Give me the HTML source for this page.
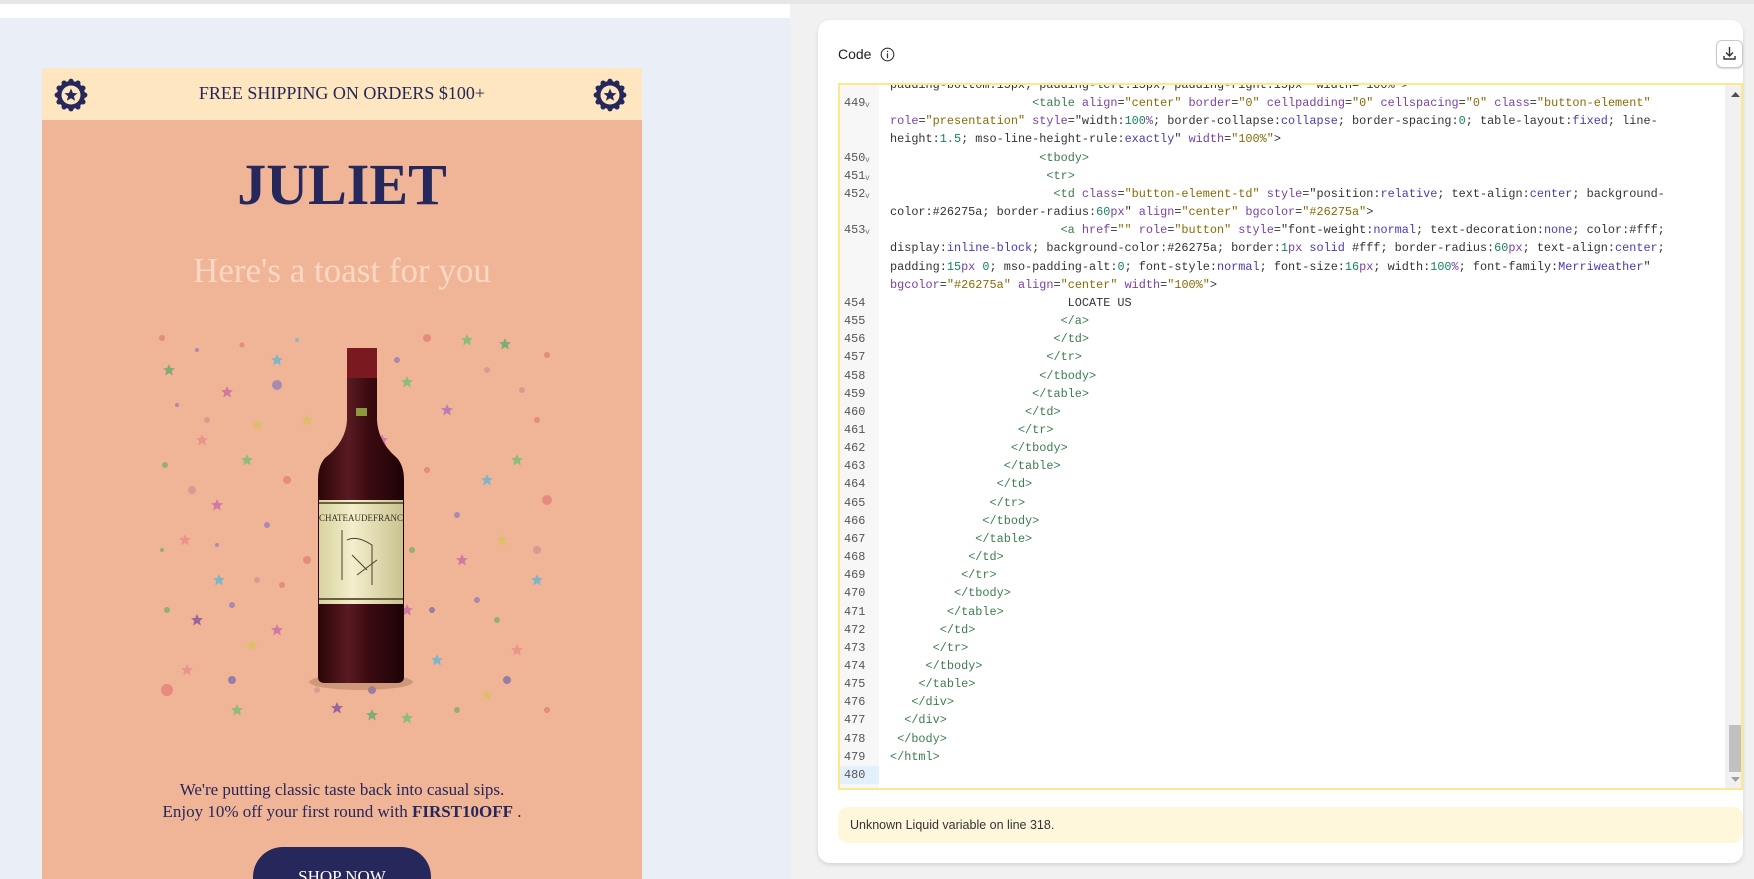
<!DOCTYPE html>
<html><head><meta charset="utf-8">
<style>
*{margin:0;padding:0;box-sizing:border-box}
body{width:1754px;height:879px;overflow:hidden;background:#f1f1f1;font-family:"Liberation Sans",sans-serif;position:relative}
.abs{position:absolute}
#topline{left:0;top:0;width:1754px;height:4px;background:#e6e6e6}
#whitebar{left:0;top:4px;width:790px;height:14px;background:#fff}
#left{left:0;top:18px;width:790px;height:861px;background:#eaeff7}
#email{left:42px;top:68px;width:600px;height:811px;background:#f0b596;overflow:hidden}
#banner{left:0;top:0;width:600px;height:52px;background:#fde6c0}
.serif{font-family:"Liberation Serif","DejaVu Serif",serif}
#card{left:818px;top:20px;width:925px;height:843px;background:#fff;border-radius:12px;box-shadow:0 2px 4px rgba(0,0,0,.12)}
#editor{left:838px;top:83px;width:905px;height:707px;border:2px solid #fce98c;background:#fff;overflow:hidden}
#gutter{left:0;top:0;width:39px;height:703px;background:#f7f7f7}
#code{left:0;top:-9px;font-family:"Liberation Mono",monospace;font-size:11.85px;line-height:18.16px;color:#333;white-space:normal}
.row{height:18.16px;display:flex;white-space:pre}
.g{width:39px;padding-left:4px;color:#555;position:relative;flex:none}
.g i{position:absolute;left:25px;top:3px;font-style:normal;font-size:8px;color:#777}
.c{padding-left:11px}
.hl .g{background:#e3effb}
.t{color:#3b7d4f}.a{color:#7a3fa8}.s{color:#8a6a05}.n{color:#12855a}.k{color:#4a3ab8}
</style></head><body>
<div class="abs" id="topline"></div>
<div class="abs" id="whitebar"></div>
<div class="abs" id="left"></div>

<div class="abs" id="email">
  <div class="abs" id="banner">
    <svg class="abs" style="left:12px;top:10px" width="34" height="34" viewBox="0 0 34 34">
      <g fill="#26275a"><circle cx="17" cy="17" r="14"/>
      <g id="tk"><circle cx="17" cy="3.2" r="2.6"/></g>
      <use href="#tk" transform="rotate(30 17 17)"/><use href="#tk" transform="rotate(60 17 17)"/><use href="#tk" transform="rotate(90 17 17)"/><use href="#tk" transform="rotate(120 17 17)"/><use href="#tk" transform="rotate(150 17 17)"/><use href="#tk" transform="rotate(180 17 17)"/><use href="#tk" transform="rotate(210 17 17)"/><use href="#tk" transform="rotate(240 17 17)"/><use href="#tk" transform="rotate(270 17 17)"/><use href="#tk" transform="rotate(300 17 17)"/><use href="#tk" transform="rotate(330 17 17)"/></g>
      <circle cx="17" cy="17" r="9.5" fill="#fde6c0"/>
      <polygon fill="#26275a" points="17,10.5 18.9,15 23.5,15.2 19.9,18.2 21.1,22.8 17,20.2 12.9,22.8 14.1,18.2 10.5,15.2 15.1,15"/>
    </svg>
    <svg class="abs" style="left:551px;top:10px" width="34" height="34" viewBox="0 0 34 34">
      <g fill="#26275a"><circle cx="17" cy="17" r="14"/>
      <g id="tk2"><circle cx="17" cy="3.2" r="2.6"/></g>
      <use href="#tk2" transform="rotate(30 17 17)"/><use href="#tk2" transform="rotate(60 17 17)"/><use href="#tk2" transform="rotate(90 17 17)"/><use href="#tk2" transform="rotate(120 17 17)"/><use href="#tk2" transform="rotate(150 17 17)"/><use href="#tk2" transform="rotate(180 17 17)"/><use href="#tk2" transform="rotate(210 17 17)"/><use href="#tk2" transform="rotate(240 17 17)"/><use href="#tk2" transform="rotate(270 17 17)"/><use href="#tk2" transform="rotate(300 17 17)"/><use href="#tk2" transform="rotate(330 17 17)"/></g>
      <circle cx="17" cy="17" r="9.5" fill="#fde6c0"/>
      <polygon fill="#26275a" points="17,10.5 18.9,15 23.5,15.2 19.9,18.2 21.1,22.8 17,20.2 12.9,22.8 14.1,18.2 10.5,15.2 15.1,15"/>
    </svg>
    <div class="abs serif" style="left:0;top:15px;width:600px;text-align:center;font-size:18px;color:#26275a">FREE SHIPPING ON ORDERS $100+</div>
  </div>
  <div class="abs serif" style="left:0;top:82px;width:600px;text-align:center;font-size:58px;font-weight:bold;color:#26275a;line-height:70px">JULIET</div>
  <div class="abs serif" style="left:0;top:183px;width:600px;text-align:center;font-size:35px;color:#fcd8c4;line-height:40px">Here's a toast for you</div>

  <svg class="abs" style="left:115px;top:262px" width="408" height="397" viewBox="0 0 408 397">
    <defs><polygon id="st" points="0,-6 1.8,-2 6,-1.8 2.8,1 3.8,5.5 0,3 -3.8,5.5 -2.8,1 -6,-1.8 -1.8,-2"/></defs>
    <g opacity=".75">
    <use href="#st" x="12" y="40" fill="#5aa86a"/><use href="#st" x="70" y="62" fill="#c766a8"/><use href="#st" x="310" y="10" fill="#6cc070"/><use href="#st" x="348" y="14" fill="#5aa86a"/>
    <use href="#st" x="100" y="95" fill="#d9c25a"/><use href="#st" x="60" y="175" fill="#c766a8"/><use href="#st" x="28" y="210" fill="#e88a8a"/><use href="#st" x="90" y="130" fill="#6cc070"/>
    <use href="#st" x="250" y="52" fill="#6cc070"/><use href="#st" x="290" y="80" fill="#a66ec2"/><use href="#st" x="330" y="150" fill="#5bb6d6"/><use href="#st" x="360" y="130" fill="#6cc070"/>
    <use href="#st" x="345" y="210" fill="#d9c25a"/><use href="#st" x="305" y="230" fill="#c766a8"/><use href="#st" x="380" y="250" fill="#5bb6d6"/><use href="#st" x="250" y="280" fill="#c766a8"/>
    <use href="#st" x="40" y="290" fill="#7b4c9a"/><use href="#st" x="95" y="315" fill="#d9c25a"/><use href="#st" x="30" y="340" fill="#e88a8a"/><use href="#st" x="80" y="380" fill="#6cc070"/>
    <use href="#st" x="180" y="378" fill="#7b4c9a"/><use href="#st" x="250" y="388" fill="#6cc070"/><use href="#st" x="330" y="365" fill="#d9c25a"/><use href="#st" x="360" y="320" fill="#e88a8a"/>
    <use href="#st" x="62" y="250" fill="#5bb6d6"/><use href="#st" x="120" y="300" fill="#c766a8"/><use href="#st" x="280" y="330" fill="#5bb6d6"/><use href="#st" x="150" y="90" fill="#d9c25a"/>
    <use href="#st" x="225" y="110" fill="#c766a8"/><use href="#st" x="120" y="30" fill="#5bb6d6"/><use href="#st" x="45" y="110" fill="#e88a8a"/><use href="#st" x="215" y="385" fill="#5aa86a"/>
    </g>
    <g opacity=".6">
    <circle cx="5" cy="8" r="3" fill="#e07070"/><circle cx="40" cy="20" r="2" fill="#7b6ec6"/><circle cx="85" cy="15" r="2.5" fill="#e07070"/><circle cx="140" cy="10" r="2" fill="#5bb6d6"/><circle cx="270" cy="8" r="4" fill="#e07070"/><circle cx="390" cy="25" r="3" fill="#e07070"/>
    <circle cx="120" cy="55" r="5" fill="#7b6ec6"/><circle cx="20" cy="75" r="2" fill="#7b6ec6"/><circle cx="50" cy="90" r="3" fill="#c09090"/><circle cx="170" cy="130" r="3" fill="#7b6ec6"/><circle cx="380" cy="90" r="3" fill="#e07070"/>
    <circle cx="8" cy="135" r="3" fill="#5aa86a"/><circle cx="130" cy="150" r="4" fill="#e07070"/><circle cx="110" cy="195" r="3" fill="#7b6ec6"/><circle cx="150" cy="230" r="4" fill="#e07070"/><circle cx="390" cy="170" r="5" fill="#e07070"/>
    <circle cx="300" cy="185" r="3" fill="#7b6ec6"/><circle cx="320" cy="270" r="3" fill="#7b6ec6"/><circle cx="380" cy="220" r="4" fill="#c09090"/><circle cx="5" cy="220" r="2" fill="#5aa86a"/><circle cx="10" cy="280" r="3" fill="#5aa86a"/>
    <circle cx="75" cy="275" r="3" fill="#7b6ec6"/><circle cx="125" cy="255" r="3" fill="#e07070"/><circle cx="75" cy="350" r="4" fill="#5a5ab0"/><circle cx="10" cy="360" r="6" fill="#e07070"/><circle cx="275" cy="280" r="3" fill="#5a5ab0"/>
    <circle cx="350" cy="350" r="4" fill="#5a5ab0"/><circle cx="215" cy="360" r="4" fill="#5a5ab0"/><circle cx="390" cy="380" r="3" fill="#e07070"/><circle cx="160" cy="360" r="3" fill="#c09090"/><circle cx="300" cy="380" r="3" fill="#5aa86a"/>
    <circle cx="240" cy="30" r="3" fill="#7b6ec6"/><circle cx="330" cy="40" r="3" fill="#c09090"/><circle cx="270" cy="140" r="3" fill="#e07070"/><circle cx="255" cy="220" r="3" fill="#5aa86a"/><circle cx="195" cy="30" r="3" fill="#c766a8"/>
    <circle cx="35" cy="160" r="4" fill="#c09090"/><circle cx="60" cy="215" r="2" fill="#7b6ec6"/><circle cx="100" cy="250" r="3" fill="#c09090"/><circle cx="340" cy="290" r="3" fill="#5aa86a"/><circle cx="365" cy="60" r="3" fill="#c09090"/>
    </g>
    <defs>
      <linearGradient id="bg" x1="0" x2="1"><stop offset="0" stop-color="#2a0508"/><stop offset=".35" stop-color="#5a1a22"/><stop offset=".6" stop-color="#3a0a10"/><stop offset="1" stop-color="#1e0306"/></linearGradient>
      <linearGradient id="lg" x1="0" x2="1"><stop offset="0" stop-color="#d8d3a0"/><stop offset=".4" stop-color="#f3eecb"/><stop offset="1" stop-color="#c9c390"/></linearGradient>
    </defs>
    <ellipse cx="204" cy="352" rx="52" ry="8" fill="#b07b60" opacity=".5"/>
    <path d="M190 22 Q190 18 194 18 L216 18 Q220 18 220 22 L220 90 Q221 112 240 128 Q247 136 247 150 L247 347 Q247 353 240 353 L168 353 Q161 353 161 347 L161 150 Q161 136 168 128 Q189 112 190 90 Z" fill="url(#bg)"/>
    <rect x="190" y="18" width="30" height="30" fill="#7a1a20"/>
    <rect x="199" y="78" width="11" height="8" fill="#8b9a3a"/>
    <rect x="162" y="170" width="84" height="104" fill="url(#lg)"/>
    <rect x="162" y="172" width="84" height="2" fill="#6a6040"/>
    <rect x="162" y="268" width="84" height="2" fill="#6a6040"/>
    <text x="204" y="191" font-family="Liberation Serif" font-size="9" text-anchor="middle" fill="#3a3020">CHATEAUDEFRANC</text>
    <path d="M185 200 L185 250 M190 210 Q200 205 215 215 L215 255 M195 225 L210 240 M200 245 L220 230" stroke="#4a4030" fill="none" stroke-width="1"/>
  </svg>

  <div class="abs serif" style="left:0;top:711px;width:600px;text-align:center;font-size:17px;line-height:22px;color:#26275a">We're putting classic taste back into casual sips.<br>Enjoy 10% off your first round with <b>FIRST10OFF</b> .</div>
  <div class="abs serif" style="left:211px;top:779px;width:178px;height:60px;border-radius:30px;background:#26275a;color:#fff;text-align:center;font-size:17px;line-height:60px">SHOP NOW</div>
</div>

<div class="abs" id="card"></div>
<div class="abs" style="left:838px;top:46px;font-size:14px;color:#202020">Code</div>
<svg class="abs" style="left:880px;top:47px" width="15" height="15" viewBox="0 0 15 15"><circle cx="7.5" cy="7.5" r="6.3" fill="none" stroke="#333" stroke-width="1.1"/><rect x="6.9" y="6.3" width="1.2" height="5" fill="#333"/><rect x="6.9" y="3.8" width="1.2" height="1.3" fill="#333"/></svg>
<div class="abs" style="left:1716px;top:40px;width:27px;height:28px;border:1px solid #c9c9c9;border-radius:6px;background:#fff;box-shadow:0 1px 1px rgba(0,0,0,.15)"></div>
<svg class="abs" style="left:1721px;top:45px" width="17" height="17" viewBox="0 0 17 17"><path d="M8.5 2 V11 M5 7.5 L8.5 11 L12 7.5 M3 11 V14 H14 V11" fill="none" stroke="#333" stroke-width="1.4"/></svg>

<div class="abs" id="editor">
  <div class="abs" id="gutter"></div>
  <div class="abs" style="left:885px;top:0;width:18px;height:703px;background:#f1f1f1"></div>
  <div class="abs" style="left:889px;top:640px;width:13px;height:47px;background:#c1c1c1"></div>
  <svg class="abs" style="left:891px;top:7px" width="9" height="6"><polygon points="0,5 4.5,0 9,5" fill="#505050"/></svg>
  <svg class="abs" style="left:891px;top:692px" width="9" height="6"><polygon points="0,0 4.5,5 9,0" fill="#a0a0a0"/></svg>
  <div class="abs" id="code"><div class="row"><span class="g"></span><span class="c">padding-bottom:15px; padding-left:15px; padding-right:15px" width="100%"&gt;</span></div><div class="row"><span class="g">449<i>v</i></span><span class="c">                    <span class="t">&lt;table</span> <span class="a">align</span>=<span class="s">"center"</span> <span class="a">border</span>=<span class="s">"0"</span> <span class="a">cellpadding</span>=<span class="s">"0"</span> <span class="a">cellspacing</span>=<span class="s">"0"</span> <span class="a">class</span>=<span class="s">"button-element"</span></span></div><div class="row"><span class="g"></span><span class="c"><span class="a">role</span>=<span class="s">"presentation"</span> <span class="a">style</span>="width:<span class="n">100</span><span class="a">%</span>; border-collapse:<span class="k">collapse</span>; border-spacing:<span class="n">0</span>; table-layout:<span class="k">fixed</span>; line-</span></div><div class="row"><span class="g"></span><span class="c">height:<span class="n">1.5</span>; mso-line-height-rule:<span class="k">exactly</span>" <span class="a">width</span>=<span class="s">"100%"</span>&gt;</span></div><div class="row"><span class="g">450<i>v</i></span><span class="c">                     <span class="t">&lt;tbody&gt;</span></span></div><div class="row"><span class="g">451<i>v</i></span><span class="c">                      <span class="t">&lt;tr&gt;</span></span></div><div class="row"><span class="g">452<i>v</i></span><span class="c">                       <span class="t">&lt;td</span> <span class="a">class</span>=<span class="s">"button-element-td"</span> <span class="a">style</span>="position:<span class="k">relative</span>; text-align:<span class="k">center</span>; background-</span></div><div class="row"><span class="g"></span><span class="c">color:#26275a; border-radius:<span class="n">60</span><span class="a">px</span>" <span class="a">align</span>=<span class="s">"center"</span> <span class="a">bgcolor</span>=<span class="s">"#26275a"</span>&gt;</span></div><div class="row"><span class="g">453<i>v</i></span><span class="c">                        <span class="t">&lt;a</span> <span class="a">href</span>=<span class="s">""</span> <span class="a">role</span>=<span class="s">"button"</span> <span class="a">style</span>="font-weight:<span class="k">normal</span>; text-decoration:<span class="k">none</span>; color:#fff;</span></div><div class="row"><span class="g"></span><span class="c">display:<span class="k">inline-block</span>; background-color:#26275a; border:<span class="n">1</span><span class="a">px</span> <span class="k">solid</span> #fff; border-radius:<span class="n">60</span><span class="a">px</span>; text-align:<span class="k">center</span>;</span></div><div class="row"><span class="g"></span><span class="c">padding:<span class="n">15</span><span class="a">px</span> <span class="n">0</span>; mso-padding-alt:<span class="n">0</span>; font-style:<span class="k">normal</span>; font-size:<span class="n">16</span><span class="a">px</span>; width:<span class="n">100</span><span class="a">%</span>; font-family:<span class="k">Merriweather</span>"</span></div><div class="row"><span class="g"></span><span class="c"><span class="a">bgcolor</span>=<span class="s">"#26275a"</span> <span class="a">align</span>=<span class="s">"center"</span> <span class="a">width</span>=<span class="s">"100%"</span>&gt;</span></div><div class="row"><span class="g">454</span><span class="c">                         LOCATE US</span></div><div class="row"><span class="g">455</span><span class="c">                        <span class="t">&lt;/a&gt;</span></span></div><div class="row"><span class="g">456</span><span class="c">                       <span class="t">&lt;/td&gt;</span></span></div><div class="row"><span class="g">457</span><span class="c">                      <span class="t">&lt;/tr&gt;</span></span></div><div class="row"><span class="g">458</span><span class="c">                     <span class="t">&lt;/tbody&gt;</span></span></div><div class="row"><span class="g">459</span><span class="c">                    <span class="t">&lt;/table&gt;</span></span></div><div class="row"><span class="g">460</span><span class="c">                   <span class="t">&lt;/td&gt;</span></span></div><div class="row"><span class="g">461</span><span class="c">                  <span class="t">&lt;/tr&gt;</span></span></div><div class="row"><span class="g">462</span><span class="c">                 <span class="t">&lt;/tbody&gt;</span></span></div><div class="row"><span class="g">463</span><span class="c">                <span class="t">&lt;/table&gt;</span></span></div><div class="row"><span class="g">464</span><span class="c">               <span class="t">&lt;/td&gt;</span></span></div><div class="row"><span class="g">465</span><span class="c">              <span class="t">&lt;/tr&gt;</span></span></div><div class="row"><span class="g">466</span><span class="c">             <span class="t">&lt;/tbody&gt;</span></span></div><div class="row"><span class="g">467</span><span class="c">            <span class="t">&lt;/table&gt;</span></span></div><div class="row"><span class="g">468</span><span class="c">           <span class="t">&lt;/td&gt;</span></span></div><div class="row"><span class="g">469</span><span class="c">          <span class="t">&lt;/tr&gt;</span></span></div><div class="row"><span class="g">470</span><span class="c">         <span class="t">&lt;/tbody&gt;</span></span></div><div class="row"><span class="g">471</span><span class="c">        <span class="t">&lt;/table&gt;</span></span></div><div class="row"><span class="g">472</span><span class="c">       <span class="t">&lt;/td&gt;</span></span></div><div class="row"><span class="g">473</span><span class="c">      <span class="t">&lt;/tr&gt;</span></span></div><div class="row"><span class="g">474</span><span class="c">     <span class="t">&lt;/tbody&gt;</span></span></div><div class="row"><span class="g">475</span><span class="c">    <span class="t">&lt;/table&gt;</span></span></div><div class="row"><span class="g">476</span><span class="c">   <span class="t">&lt;/div&gt;</span></span></div><div class="row"><span class="g">477</span><span class="c">  <span class="t">&lt;/div&gt;</span></span></div><div class="row"><span class="g">478</span><span class="c"> <span class="t">&lt;/body&gt;</span></span></div><div class="row"><span class="g">479</span><span class="c"><span class="t">&lt;/html&gt;</span></span></div><div class="row hl"><span class="g">480</span><span class="c"></span></div></div>
</div>

<div class="abs" style="left:838px;top:807px;width:905px;height:36px;background:#fff7dc;border-radius:10px;font-size:12.5px;color:#333;line-height:36px;padding-left:12px">Unknown Liquid variable on line 318.</div>
</body></html>
